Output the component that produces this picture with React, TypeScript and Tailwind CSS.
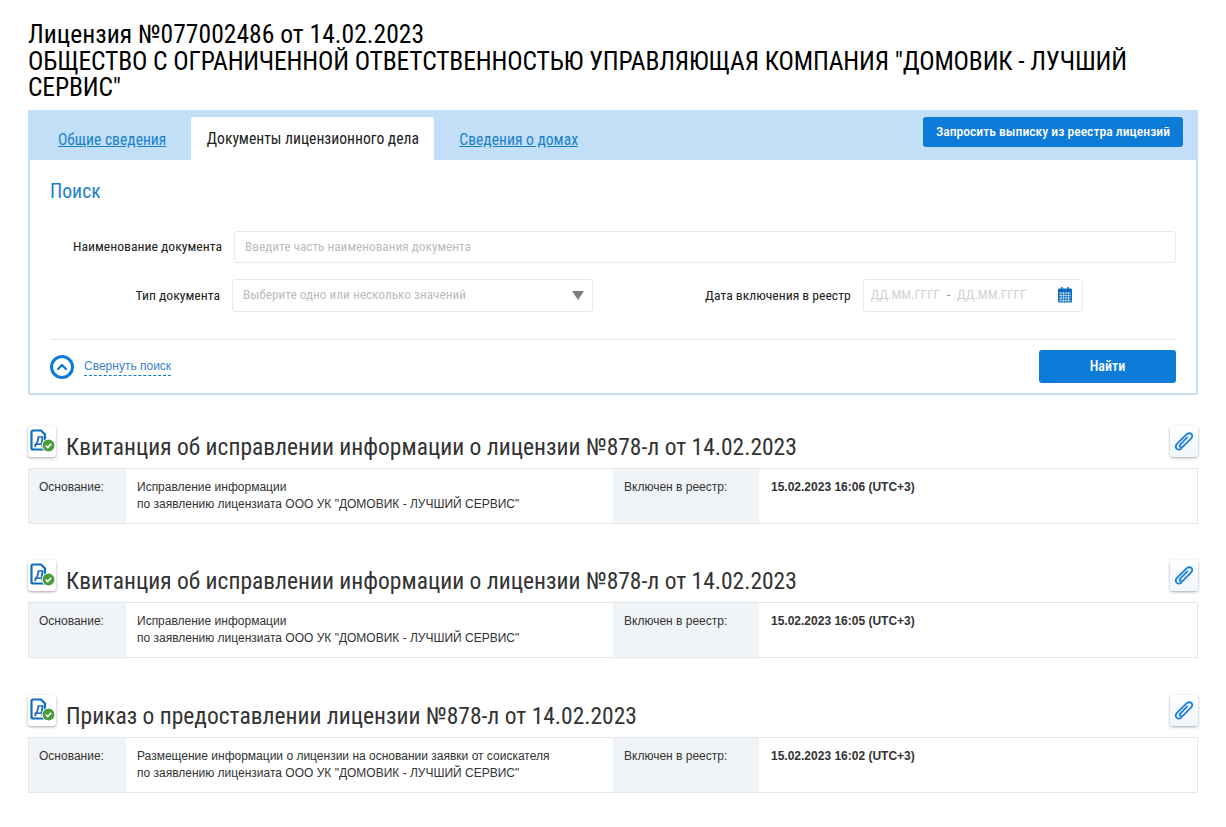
import { ChevronUp } from "lucide-react";

const cond = "font-['Roboto',sans-serif] [font-stretch:75%]";

const DocIcon = () => (
  <div className="flex h-[31px] w-7 items-center justify-center rounded-[3px] bg-white shadow-[0_1px_3px_rgba(0,0,0,0.35)]">
    <svg width="26" height="26" viewBox="0 0 26 26" fill="none">
      <path d="M4 2.5h8l4 4V20a1.5 1.5 0 0 1-1.5 1.5H4A1.5 1.5 0 0 1 2.5 20V4A1.5 1.5 0 0 1 4 2.5z" stroke="#0f6cbd" strokeWidth="2.2" />
      <text x="5" y="17" fontSize="12.5" fontWeight="700" transform="skewX(-6) translate(2 0)" fill="#0f6cbd" fontFamily="Roboto, sans-serif">Д</text>
      <circle cx="19.5" cy="17.5" r="6.4" fill="#4a9b3c" stroke="#fff" strokeWidth="1" />
      <path d="M16.7 17.5l2 2 3.5-3.7" stroke="#fff" strokeWidth="1.7" />
    </svg>
  </div>
);

const ClipButton = () => (
  <div className="flex h-[31px] w-7 items-center justify-center rounded-[3px] bg-gradient-to-b from-white to-[#eef6fc] shadow-[0_1px_3px_rgba(0,0,0,0.35)]">
    <svg width="20" height="20" viewBox="0 0 22 22" fill="none">
      <path d="M8 19.5c-2.5 1.5-4.5.8-5.5-.6-1-1.5-.6-3.4 1-5L13.5 4c2-1.9 4.4-2 5.7-.6 1.3 1.4 1 3.4-.8 5.2l-8.6 8.6c-1 1-2.2 1.1-3 .3-.7-.8-.6-1.9.4-2.9L14.5 7" stroke="#1b7fdc" strokeWidth="2" strokeLinecap="round" />
    </svg>
  </div>
);

const CalendarIcon = () => (
  <svg width="14" height="16" viewBox="0 0 14 16">
    <rect x="3" y="0" width="1.5" height="3" fill="#0f6cbd" />
    <rect x="9.5" y="0" width="1.5" height="3" fill="#0f6cbd" />
    <rect x="0" y="1.5" width="14" height="14" rx="1" fill="#0f6cbd" />
    <path d="M1 6h12M1 8.5h12M1 11h12M1 13.5h12M3 5v10M5.5 5v10M8 5v10M10.5 5v10" stroke="#cfe3f5" strokeWidth="0.7" />
  </svg>
);

const DocBlock = ({ title, reason, date, className }: { title: string; reason: string; date: string; className?: string }) => (
  <div className={className}>
    <div className="flex h-[42px] items-start">
      <DocIcon />
      <h2 className={`${cond} ml-[10px] mt-[6px] flex-1 text-[23.5px] leading-[30px] font-normal text-[#333333]`}>{title}</h2>
      <ClipButton />
    </div>
    <div className="flex h-14 border border-[#e3e6ea] font-['Liberation_Sans',sans-serif] text-xs leading-[17px] text-[#333333]">
      <div className="w-[97px] shrink-0 bg-[#f1f4f7] px-[10px] pt-[10px]">Основание:</div>
      <div className="w-[487px] shrink-0 pt-[10px] pr-[10px] pl-[11px]">
        {reason}
        <br />
        по заявлению лицензиата ООО УК "ДОМОВИК - ЛУЧШИЙ СЕРВИС"
      </div>
      <div className="w-[146px] shrink-0 bg-[#f1f4f7] pt-[10px] pr-[10px] pl-[11px]">Включен в реестр:</div>
      <div className="flex-1 pt-[10px] pr-[10px] pl-[12px] font-bold">{date}</div>
    </div>
  </div>
);

export default function App() {
  return (
    <div className="min-h-[827px] w-[1226px] bg-white px-7 pt-[21px]">
      <h1 className={`${cond} text-[25.6px] leading-[26.5px] font-normal text-black`}>
        Лицензия №077002486 от 14.02.2023
        <br />
        <span className="tracking-[-0.15px]">
          ОБЩЕСТВО С ОГРАНИЧЕННОЙ ОТВЕТСТВЕННОСТЬЮ УПРАВЛЯЮЩАЯ КОМПАНИЯ "ДОМОВИК - ЛУЧШИЙ СЕРВИС"
        </span>
      </h1>

      <div className="mt-[9px] h-[285px] rounded-b-[3px] border-2 border-t-0 border-[#c2dff7] bg-white">
        <div className={`${cond} -mx-[2px] flex h-[50px] items-start bg-[#c2dff7] pt-[7px] pr-[15px] text-[15.6px]`}>
          <a className="ml-[30px] mt-[12px] text-[#1a7fc9] underline">Общие сведения</a>
          <div className="ml-[25px] flex h-[43px] w-[243px] items-center justify-center rounded-t-[3px] bg-white pt-[4px] text-[#222222]">
            Документы лицензионного дела
          </div>
          <a className="ml-[25px] mt-[12px] text-[#1a7fc9] underline">Сведения о домах</a>
          <button className="ml-auto h-[30px] w-[260px] rounded-[3px] bg-[#0d7bd8] text-[13.65px] font-medium text-white">
            Запросить выписку из реестра лицензий
          </button>
        </div>

        <div className={`${cond} px-5`}>
          <div className="pt-[19px] text-[19.7px] leading-[26px] text-[#1a7fc9]">Поиск</div>

          <div className="mt-[26px] flex h-8 items-center">
            <label className="w-[172px] text-right text-[13.7px] text-[#222222]">Наименование документа</label>
            <div className="ml-3 flex h-8 flex-1 items-center rounded-[3px] border border-[#e6e8eb] px-[10px] text-[13.3px] text-[#b9bdc2]">
              Введите часть наименования документа
            </div>
          </div>

          <div className="mt-4 flex h-[33px] items-center">
            <label className="w-[170px] text-right text-[13.7px] text-[#222222]">Тип документа</label>
            <div className="ml-3 flex h-[33px] w-[361px] items-center justify-between rounded-[3px] border border-[#e6e8eb] pr-2 pl-[10px] text-[13.3px] text-[#b9bdc2]">
              Выберите одно или несколько значений
              <span className="h-0 w-0 border-x-[6px] border-t-[9px] border-x-transparent border-t-[#7f7f7f]" />
            </div>
            <label className="ml-[112px] text-[13.65px] text-[#222222]">Дата включения в реестр</label>
            <div className="ml-3 flex h-[33px] w-[220px] items-center rounded-[3px] border border-[#e6e8eb] pr-[10px] pl-[7px] text-[13px] text-[#cfd2d6]">
              ДД.ММ.ГГГГ
              <span className="mx-[7px] text-[#8a8e93]">-</span>
              ДД.ММ.ГГГГ
              <span className="ml-auto flex">
                <CalendarIcon />
              </span>
            </div>
          </div>

          <div className="mt-[27px] flex h-[45px] items-start justify-between border-t border-[#e3e6ea] pt-[10px]">
            <div className="flex items-start">
              <span className="mt-[5px] flex h-6 w-6 items-center justify-center rounded-full border-[3px] border-[#0d7bd8]">
                <ChevronUp size={16} strokeWidth={3.5} className="text-[#0d7bd8]" />
              </span>
              <a className="mt-[5px] ml-[10px] h-[21px] border-b border-dashed border-[#0d7bd8] pt-px font-['Liberation_Sans',sans-serif] text-xs leading-[20px] text-[#3b7fd0] [font-stretch:100%]">
                Свернуть поиск
              </a>
            </div>
            <button className="h-[33px] w-[137px] rounded-[3px] bg-[#0d7bd8] text-sm font-medium text-white">Найти</button>
          </div>
        </div>
      </div>

      <div className="mt-[31px] flex flex-col">
        <DocBlock
          title="Квитанция об исправлении информации о лицензии №878-л от 14.02.2023"
          reason="Исправление информации"
          date="15.02.2023 16:06 (UTC+3)"
        />
        <DocBlock
          className="mt-9"
          title="Квитанция об исправлении информации о лицензии №878-л от 14.02.2023"
          reason="Исправление информации"
          date="15.02.2023 16:05 (UTC+3)"
        />
        <DocBlock
          className="mt-[37px]"
          title="Приказ о предоставлении лицензии №878-л от 14.02.2023"
          reason="Размещение информации о лицензии на основании заявки от соискателя"
          date="15.02.2023 16:02 (UTC+3)"
        />
      </div>
    </div>
  );
}
